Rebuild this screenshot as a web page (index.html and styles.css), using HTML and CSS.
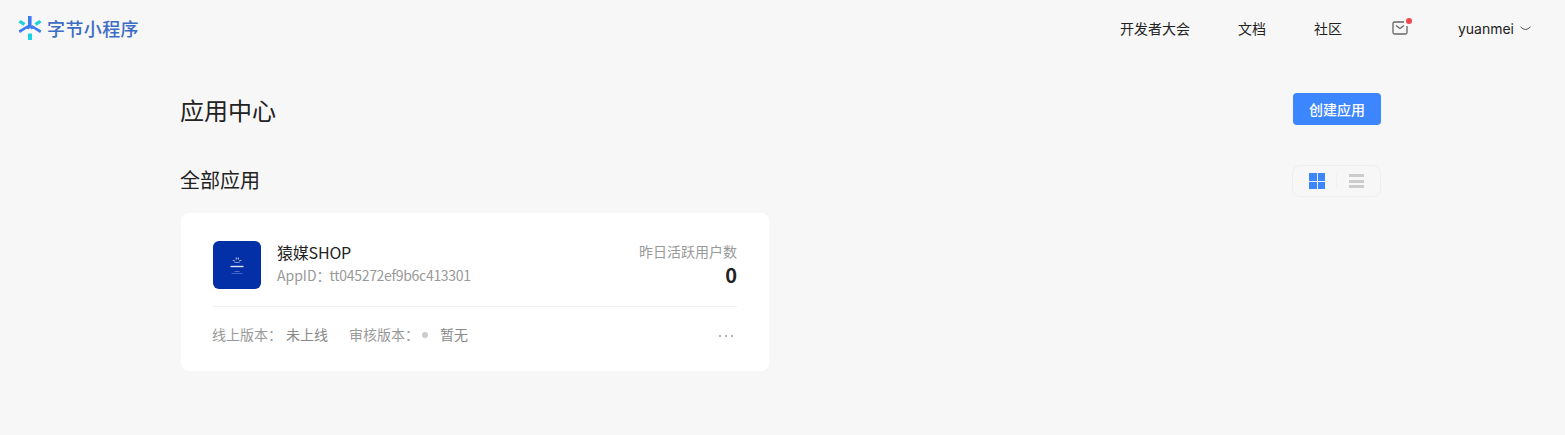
FILE: index.html
```html
<!DOCTYPE html>
<html lang="zh-CN">
<head>
    <meta charset="UTF-8">
    <title>应用中心</title>
    <link rel="stylesheet" href="styles.css">
</head>
<body>
    <header class="topbar">
        <div class="brand">
            <svg class="brand-icon" width="24" height="26" viewBox="0 0 24 26">
                <path d="M10 1h3.600v11.500h-3.600z" fill="#3c7cf0"/>
                <path d="M.5 15.500l9.500-5.500 2 2.500-1 1.800-2.500-.6-6.500 4.300z" fill="#3c7cf0"/>
                <path d="M23.500 15.500l-9.500-5.500-2 2.500 1 1.800 2.500-.6 6.500 4.300z" fill="#3c7cf0"/>
                <path d="M.5 7.500l2-2.500 5 3-2 2.800z" fill="#22cfdc"/>
                <path d="M23.500 7.500l-2-2.500-5 3 2 2.800z" fill="#22cfdc"/>
                <path d="M10 18.500h4v6.500h-4z" fill="#19d3e0"/>
            </svg>
            <span class="brand-name">字节小程序</span>
        </div>
        <nav class="nav">
            <a class="nav-link nav-conf">开发者大会</a>
            <a class="nav-link nav-docs">文档</a>
            <a class="nav-link nav-forum">社区</a>
            <span class="mail">
                <svg width="16" height="14" viewBox="0 0 16 14" fill="none">
                    <path d="M12 1H2.500A1.500 1.500 0 0 0 1 2.500v9A1.500 1.500 0 0 0 2.500 13h11a1.500 1.500 0 0 0 1.500-1.500V5" stroke="#666" stroke-width="1.300"/>
                    <path d="M4 4.500l4 3 4-3" stroke="#666" stroke-width="1.300"/>
                </svg>
                <i class="mail-dot"></i>
            </span>
            <span class="user">yuanmei
                <svg width="11" height="5" viewBox="0 0 11 5" fill="none"><path d="M.5 .8Q5.500 6.200 10.500 .8" stroke="#555"/></svg>
            </span>
        </nav>
    </header>

    <main class="page">
        <div class="page-head">
            <h1 class="page-title">应用中心</h1>
            <button class="btn-create">创建应用</button>
        </div>
        <div class="section-head">
            <h2 class="section-title">全部应用</h2>
            <div class="view-switch">
                <span class="grid-icon"><i></i><i></i><i></i><i></i></span>
                <span class="switch-line"></span>
                <span class="list-icon"><i></i><i></i><i></i></span>
            </div>
        </div>
        <div class="app-card">
            <div class="app-top">
                <div class="app-logo">
                    <svg width="48" height="48" viewBox="0 0 48 48">
                        <path d="M19 19.500l2.500.8v-1.400zM29 19.500l-2.500.8v-1.400z" fill="#f4e08a"/>
                        <path d="M22.800 16.500h.8v2h-.8zM24.800 16.500h.8v2h-.8z" fill="#fff"/>
                        <path d="M21 21q3 1.200 6 0" stroke="#fff" stroke-width=".5" fill="none"/>
                        <path d="M17.500 24.800h13v1.400h-13z" fill="#dfe6fa"/>
                        <path d="M21.500 30h5v.5h-5z" fill="#9fb2ea"/>
                        <path d="M18.500 32h11v.6h-11z" fill="#6f8cdc"/>
                    </svg>
                </div>
                <div class="app-info">
                    <div class="app-name">猿媒SHOP</div>
                    <div class="app-id">AppID：<span class="id-num">tt045272ef9b6c413301</span></div>
                </div>
                <div class="app-stat">
                    <div class="stat-label">昨日活跃用户数</div>
                    <div class="stat-value">0</div>
                </div>
            </div>
            <div class="app-bottom">
                <span class="ver-label">线上版本：</span>
                <span class="ver-value">未上线</span>
                <span class="ver-label ver-review">审核版本：</span>
                <i class="ver-dot"></i>
                <span class="ver-value">暂无</span>
                <span class="more"><i></i><i></i><i></i></span>
            </div>
        </div>
    </main>
</body>
</html>
```

FILE: styles.css
```css
*{
    box-sizing: border-box;
}
body{
    margin: 0;
    background-color: #f7f7f7;
    color: #222;
    font-family: "Noto Sans CJK SC", "Inter", sans-serif;
    font-size: 14px;
}
.topbar{
    height: 56px;
    display: flex;
    align-items: center;
    justify-content: space-between;
    padding: 0 34px 0 18px;
}
.brand{
    display: flex;
    align-items: center;
    gap: 5px;
}
.brand-name{
    color: #3d6cc4;
    font-size: 18px;
    font-weight: 500;
    letter-spacing: 0.4px;
}
.nav{
    display: flex;
    align-items: center;
}
.nav-link{
    font-size: 14px;
    color: #222;
}
.nav-conf{
    margin-right: 48px;
}
.nav-docs{
    margin-right: 48px;
}
.nav-forum{
    margin-right: 50px;
}
.mail{
    position: relative;
    display: flex;
    margin-right: 50px;
}
.mail-dot{
    position: absolute;
    top: -3px;
    right: -4px;
    width: 6px;
    height: 6px;
    border-radius: 50%;
    background-color: #f0474f;
}
.user{
    display: flex;
    align-items: center;
    gap: 6px;
    font-family: "Inter", sans-serif;
    font-size: 14px;
}
.page{
    width: 1200px;
    margin-left: 181px;
}
.page-head{
    display: flex;
    justify-content: space-between;
    align-items: center;
    height: 32px;
    margin-top: 37px;
}
.page-title{
    margin: 0 0 0 -1px;
    font-size: 24px;
    font-weight: 400;
    color: #222;
}
.btn-create{
    width: 88px;
    height: 32px;
    border: none;
    border-radius: 4px;
    background-color: #3c86ff;
    color: #fff;
    font-family: inherit;
    font-size: 14px;
    font-weight: 500;
}
.section-head{
    display: flex;
    justify-content: space-between;
    align-items: center;
    height: 32px;
    margin-top: 40px;
}
.section-title{
    margin: -4px 0 0 -1px;
    font-size: 20px;
    font-weight: 400;
    color: #222;
}
.view-switch{
    width: 89px;
    height: 32px;
    display: flex;
    align-items: center;
    gap: 11px;
    padding-left: 16px;
    border: 1px solid #eeeeee;
    border-radius: 8px;
}
.grid-icon{
    width: 16px;
    height: 16px;
    display: grid;
    grid-template-columns: 1fr 1fr;
    gap: 1px;
}
.grid-icon i{
    background-color: #3c86ff;
}
.switch-line{
    width: 1px;
    height: 14px;
    background-color: #f0f0f0;
}
.list-icon{
    width: 15px;
    height: 14px;
    margin-left: 1px;
    display: flex;
    flex-direction: column;
    justify-content: space-between;
}
.list-icon i{
    height: 3px;
    background-color: #cccccc;
}
.app-card{
    width: 588px;
    height: 158px;
    margin-top: 16px;
    padding: 28px 32px 0;
    background-color: #fff;
    border-radius: 8px;
}
.app-top{
    display: flex;
    height: 66px;
    border-bottom: 1px solid #f0f0f0;
}
.app-logo{
    width: 48px;
    height: 48px;
    border-radius: 6px;
    background-color: #0330a6;
}
.app-info{
    margin-left: 16px;
    flex: 1;
}
.app-name{
    font-size: 16px;
    line-height: 23px;
    letter-spacing: -0.2px;
    color: #222;
}
.app-id{
    font-size: 14px;
    line-height: 23px;
    color: #999;
}
.id-num{
    letter-spacing: -0.3px;
    margin-left: -1px;
}
.app-stat{
    text-align: right;
}
.stat-label{
    font-size: 14px;
    line-height: 21px;
    color: #999;
}
.stat-value{
    font-size: 20px;
    line-height: 25px;
    font-weight: 700;
    color: #222;
}
.app-bottom{
    display: flex;
    align-items: center;
    height: 54px;
    margin-left: -1px;
    font-size: 14px;
    color: #999;
}
.ver-label{
    margin-right: 4px;
}
.ver-review{
    margin-left: 21px;
    margin-right: 3px;
}
.ver-dot{
    width: 6px;
    height: 6px;
    margin: 2px 12px 0 0;
    border-radius: 50%;
    background-color: #cccccc;
}
.ver-value{
    color: #888;
}
.more{
    display: flex;
    gap: 4px;
    margin-left: auto;
    margin-right: 4px;
    margin-top: 4px;
}
.more i{
    width: 2px;
    height: 2px;
    background-color: #999;
    border-radius: 50%;
}
```
